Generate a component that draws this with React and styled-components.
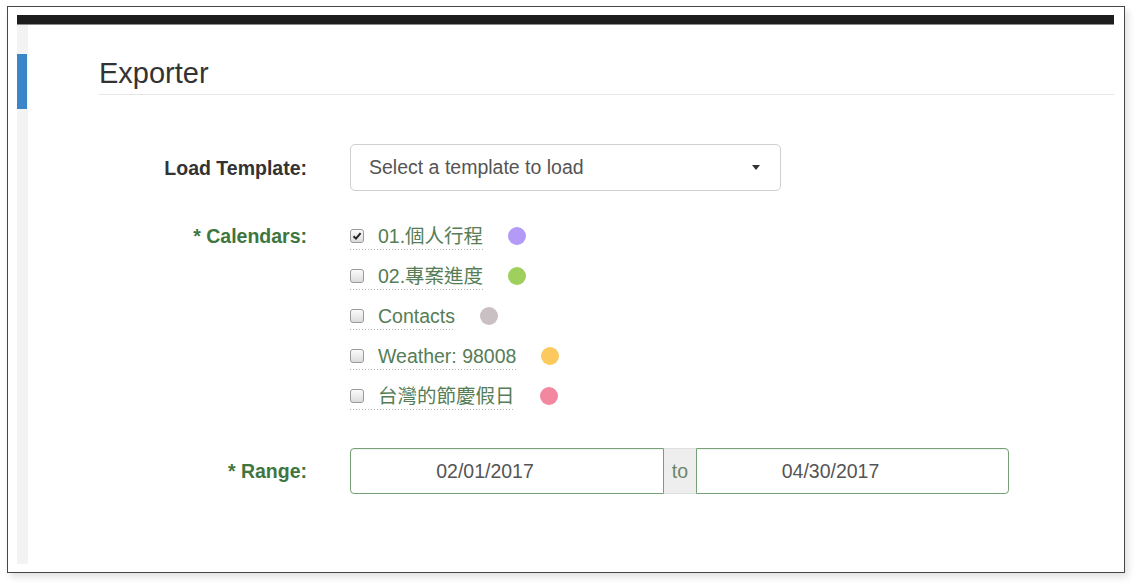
import React from "react";
import styled, { createGlobalStyle } from "styled-components";

const Global = createGlobalStyle`
  html, body { margin: 0; padding: 0; background: #ffffff; }
  body { font-family: "Liberation Sans", Arial, sans-serif; }
  * { box-sizing: border-box; }
`;

const Page = styled.div`
  padding: 6px 0 0 7px;
  width: 1137px;
  height: 585px;
`;

const Frame = styled.div`
  width: 1118px;
  height: 567px;
  border: 1px solid #474747;
  background: #fff;
  box-shadow: 3px 4px 7px rgba(0, 0, 0, 0.12);
  padding: 8px 10px 8px 9px;
  display: flex;
  flex-direction: column;
`;

const TopBar = styled.div`
  height: 10px;
  background: #1d1d1d;
  border-bottom: 1px solid #8a8a8a;
  flex: none;
`;

const Body = styled.div`
  flex: 1;
  display: flex;
  min-height: 0;
`;

const SideStrip = styled.div`
  width: 11px;
  background: #f3f3f3;
  padding-top: 29px;
  flex: none;
`;

const SideMarker = styled.div`
  width: 10px;
  height: 55px;
  background: #3b86c9;
`;

const Content = styled.div`
  flex: 1;
  padding-left: 71px;
`;

const Title = styled.h1`
  margin: 0;
  padding-top: 32px;
  padding-bottom: 5px;
  font-size: 29px;
  line-height: 32px;
  font-weight: 400;
  color: #333;
  border-bottom: 1px solid #e6e6e6;
`;

const Row = styled.div`
  display: flex;
  align-items: ${(p) => p.$align || "center"};
  margin-top: ${(p) => p.$top}px;
  gap: 43px;
`;

const Label = styled.div`
  width: 208px;
  flex: none;
  text-align: right;
  font-size: 19.5px;
  font-weight: 700;
  color: ${(p) => (p.$ok ? "#3d763e" : "#333")};
  line-height: ${(p) => p.$lh || 22}px;
`;

const Select = styled.div`
  width: 431px;
  height: 47px;
  border: 1px solid #cfcfcf;
  border-radius: 5px;
  display: flex;
  align-items: center;
  justify-content: space-between;
  padding: 0 20px 0 18px;
  font-size: 19.5px;
  color: #555;
`;

const Caret = styled.span`
  width: 0;
  height: 0;
  border-left: 4px solid transparent;
  border-right: 4px solid transparent;
  border-top: 5px solid #333;
`;

const List = styled.div`
  display: flex;
  flex-direction: column;
`;

const Item = styled.div`
  height: 40px;
  display: flex;
  align-items: flex-start;
  padding-top: 9px;
`;

const ItemLabel = styled.label`
  display: inline-flex;
  align-items: center;
  gap: 14px;
  padding-bottom: 3px;
  font-size: 19.5px;
  line-height: 22px;
  color: #567d56;
  font-family: "Liberation Sans", "Noto Sans CJK TC", sans-serif;
  background-image: repeating-linear-gradient(to right, #b5b5b5 0 1px, transparent 1px 3px);
  background-size: 100% 1px;
  background-repeat: no-repeat;
  background-position: left bottom;
`;

const Box = styled.span`
  width: 14px;
  height: 14px;
  border: 1px solid #9a9a9a;
  border-radius: 3px;
  background: linear-gradient(#fbfbfb, #dcdcdc);
  display: inline-flex;
  align-items: center;
  justify-content: center;
  flex: none;
`;

const Dot = styled.span`
  width: 18px;
  height: 18px;
  border-radius: 50%;
  background: ${(p) => p.$c};
  margin-left: 25px;
  margin-top: 2px;
  flex: none;
`;

const Range = styled.div`
  display: flex;
  height: 46px;
`;

const DateInput = styled.div`
  width: ${(p) => p.$w}px;
  height: 46px;
  border: 1px solid #76a076;
  border-radius: ${(p) => (p.$first ? "4px 0 0 4px" : "0 4px 4px 0")};
  display: flex;
  align-items: center;
  justify-content: center;
  padding-right: 44px;
  font-size: 19.5px;
  color: #555;
  box-shadow: inset 0 1px 1px rgba(0, 0, 0, 0.06);
`;

const Addon = styled.div`
  width: 32px;
  height: 46px;
  background: #eeeeee;
  border-top: 1px solid #dedede;
  border-bottom: 1px solid #dedede;
  display: flex;
  align-items: center;
  justify-content: center;
  font-size: 19.5px;
  color: #6a866a;
`;

const calendars = [
  { name: "01.個人行程", color: "#b39af6", checked: true },
  { name: "02.專案進度", color: "#9fcf5c" },
  { name: "Contacts", color: "#cabfc2" },
  { name: "Weather: 98008", color: "#fbc95d" },
  { name: "台灣的節慶假日", color: "#f3879f" },
];

function Check({ checked }) {
  return (
    <Box>
      {checked && (
        <svg width="10" height="10" viewBox="0 0 10 10">
          <path d="M1.5 5.2 L4 7.6 L8.6 2.2" fill="none" stroke="#222" strokeWidth="2" />
        </svg>
      )}
    </Box>
  );
}

export default function App() {
  return (
    <Page>
      <Global />
      <Frame>
        <TopBar />
        <Body>
          <SideStrip>
            <SideMarker />
          </SideStrip>
          <Content>
            <Title>Exporter</Title>
            <Row $top={49}>
              <Label>Load Template:</Label>
              <Select>
                <span>Select a template to load</span>
                <Caret />
              </Select>
            </Row>
            <Row $top={25} $align="flex-start">
              <Label $ok $lh={40}>* Calendars:</Label>
              <List>
                {calendars.map((c) => (
                  <Item key={c.name}>
                    <ItemLabel>
                      <Check checked={c.checked} />
                      <span>{c.name}</span>
                    </ItemLabel>
                    <Dot $c={c.color} />
                  </Item>
                ))}
              </List>
            </Row>
            <Row $top={32}>
              <Label $ok>* Range:</Label>
              <Range>
                <DateInput $w={314} $first>02/01/2017</DateInput>
                <Addon>to</Addon>
                <DateInput $w={313}>04/30/2017</DateInput>
              </Range>
            </Row>
          </Content>
        </Body>
      </Frame>
    </Page>
  );
}
